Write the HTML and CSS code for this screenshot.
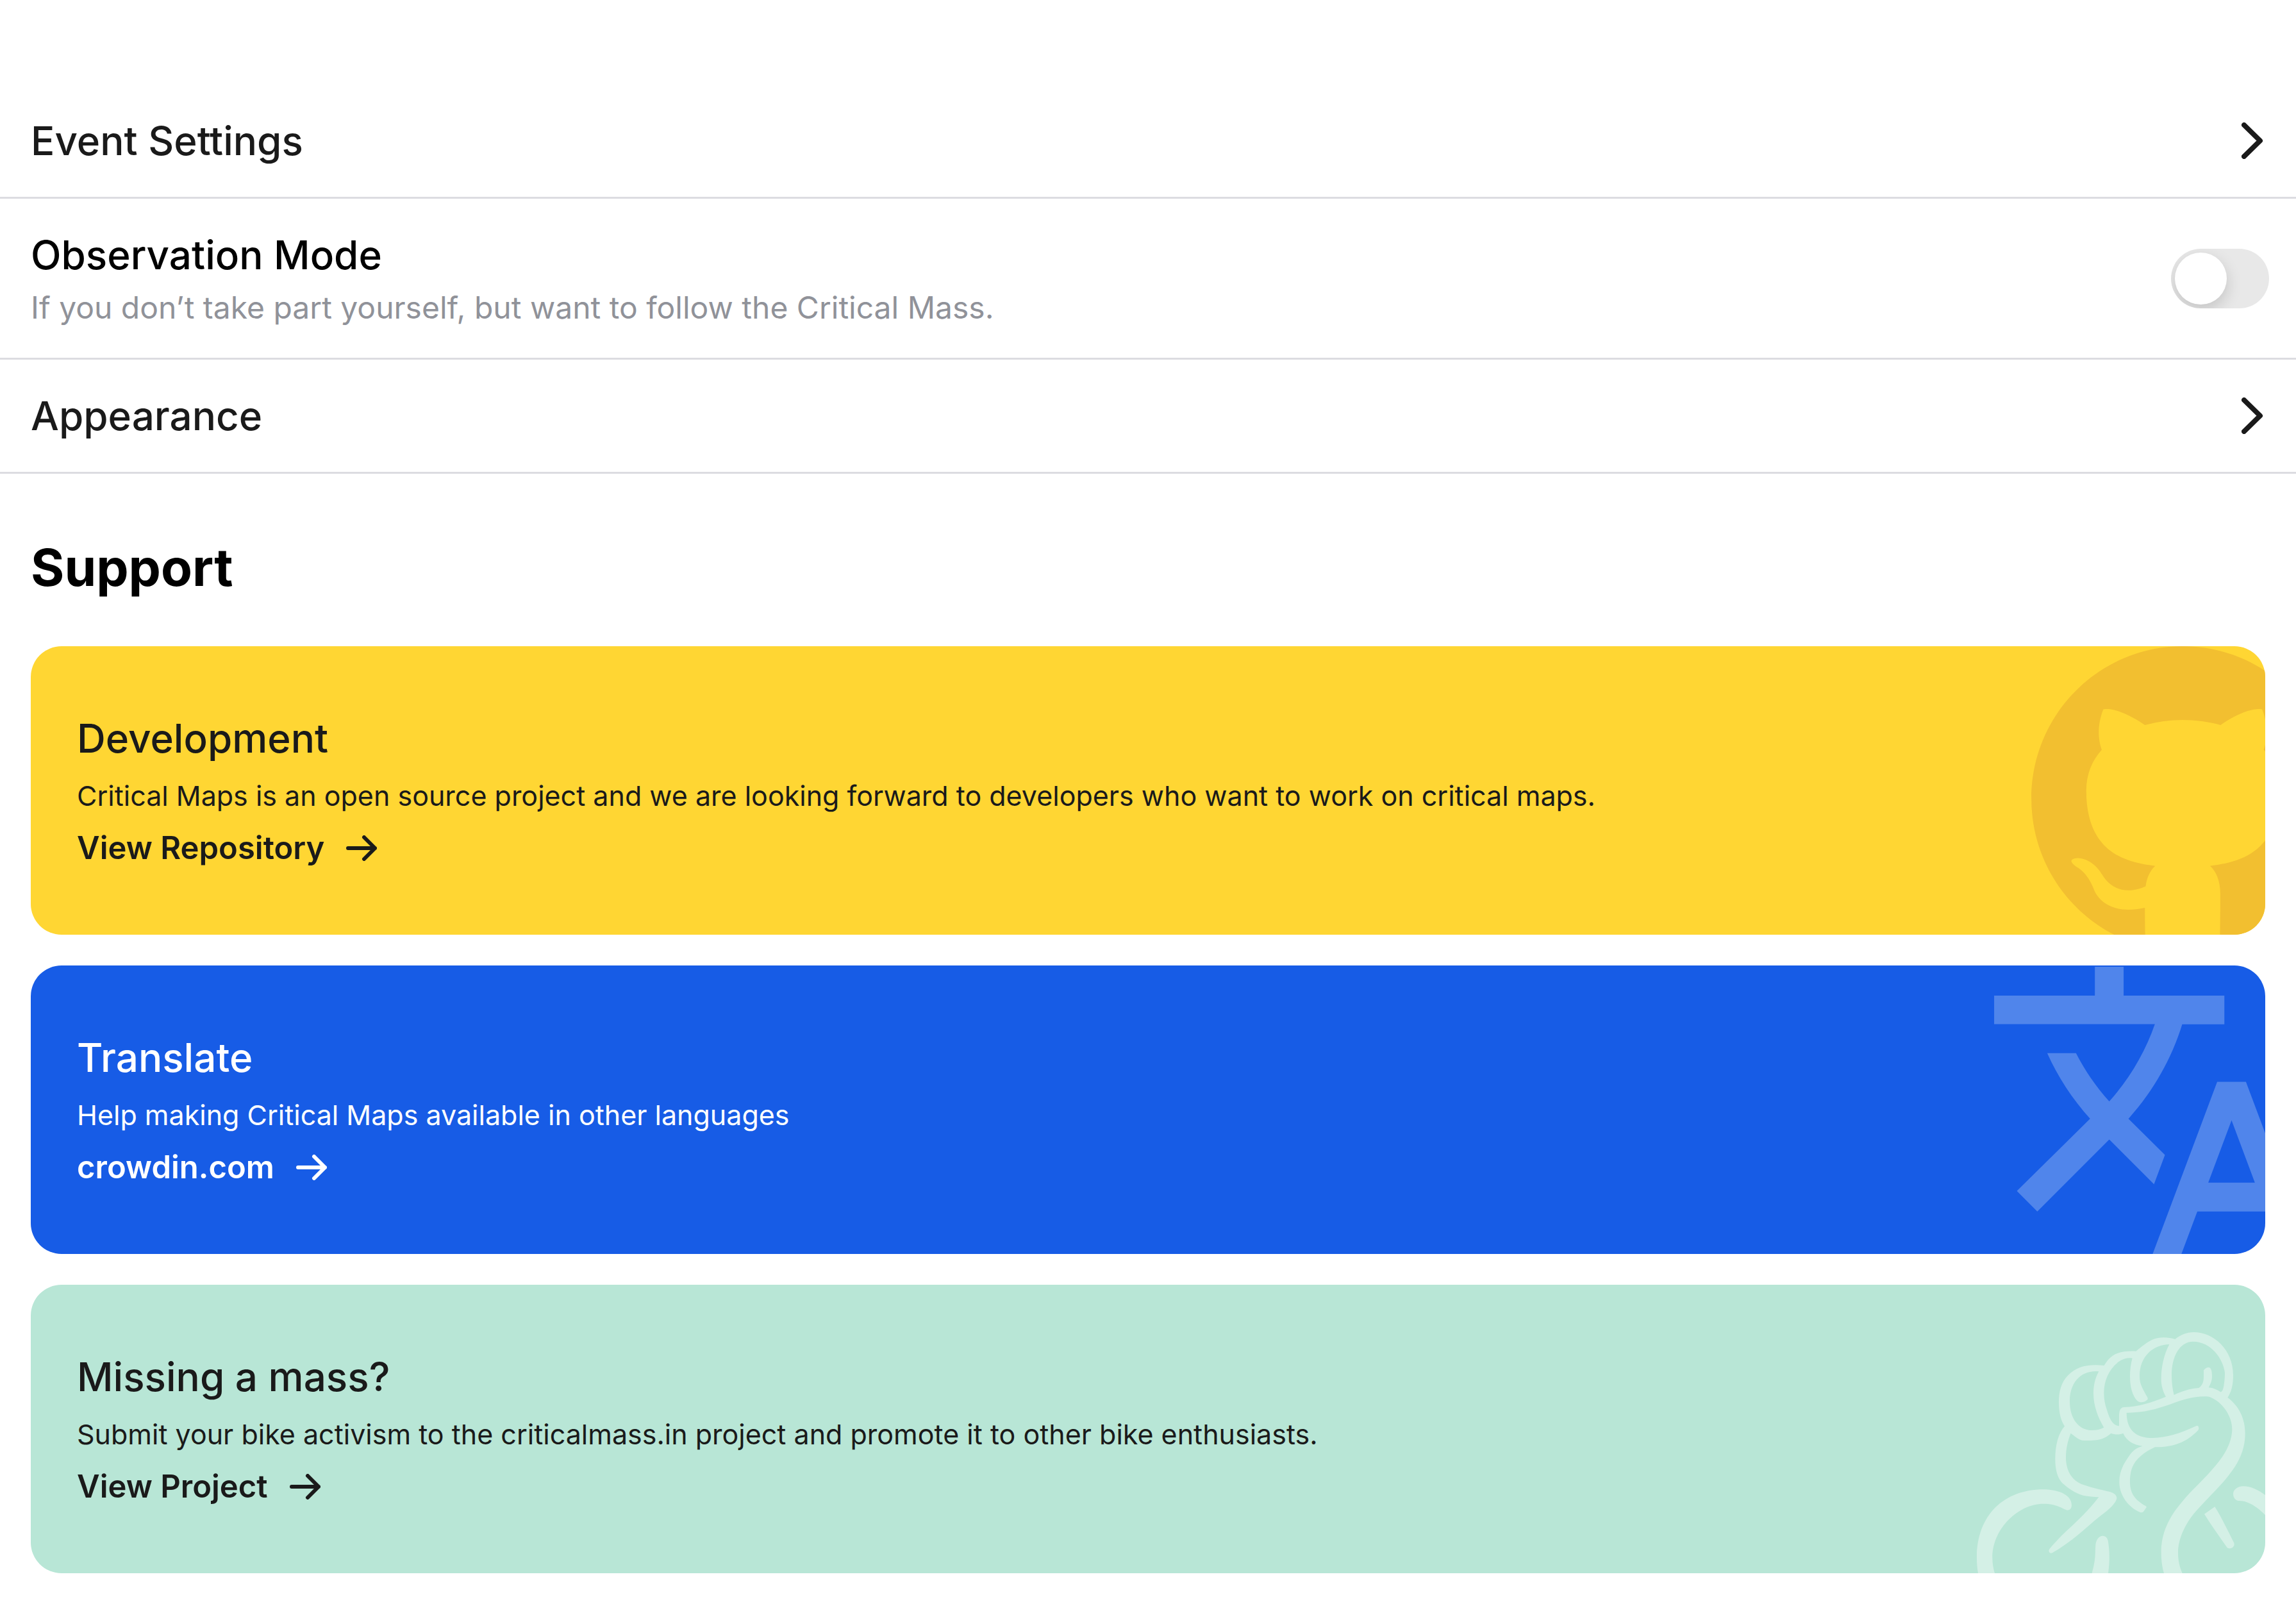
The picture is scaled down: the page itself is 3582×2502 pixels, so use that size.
FILE: index.html
```html
<!DOCTYPE html>
<html lang="en">
<head>
<meta charset="utf-8">
<meta name="viewport" content="width=device-width, initial-scale=1">
<title>Settings</title>
<link rel="stylesheet" href="styles.css">
</head>
<body>
<main class="settings">
  <nav class="rows" aria-label="Settings">
    <a class="row" href="#events">
      <span class="row-title">Event Settings</span>
      <svg class="chevron" viewBox="0 0 37 57" aria-hidden="true"><path d="M4 4 29 28.500 4 53"/></svg>
    </a>
    <div class="row row-toggle">
      <label class="row-text" for="observation">
        <span class="row-title strong">Observation Mode</span>
        <span class="row-note">If you don’t take part yourself, but want to follow the Critical Mass.</span>
      </label>
      <input class="switch" type="checkbox" role="switch" id="observation">
    </div>
    <a class="row" href="#appearance">
      <span class="row-title">Appearance</span>
      <svg class="chevron" viewBox="0 0 37 57" aria-hidden="true"><path d="M4 4 29 28.500 4 53"/></svg>
    </a>
  </nav>

  <section class="support">
    <h2 class="heading">Support</h2>
    <div class="cards">
      <article class="card card-dev">
        <svg class="art art-github" viewBox="0 0 98 96" aria-hidden="true"><path fill-rule="evenodd" d="M48.854 0C21.839 0 0 22 0 49.217c0 21.756 13.993 40.172 33.405 46.69 2.427.49 3.316-1.059 3.316-2.362 0-1.141-.08-5.052-.08-9.127-13.59 2.934-16.42-5.867-16.42-5.867-2.184-5.704-5.42-7.17-5.42-7.17-4.448-3.015.324-3.015.324-3.015 4.934.326 7.523 5.052 7.523 5.052 4.367 7.496 11.404 5.378 14.235 4.074.404-3.178 1.699-5.378 3.074-6.6-10.839-1.141-22.243-5.378-22.243-24.283 0-5.378 1.94-9.778 5.014-13.2-.485-1.222-2.184-6.275.486-13.038 0 0 4.125-1.304 13.426 5.052a46.97 46.97 0 0 1 12.214-1.63c4.125 0 8.33.571 12.213 1.63 9.302-6.356 13.427-5.052 13.427-5.052 2.67 6.763.97 11.816.485 13.038 3.155 3.422 5.015 7.822 5.015 13.2 0 18.905-11.404 23.06-22.324 24.283 1.78 1.548 3.316 4.481 3.316 9.126 0 6.6-.08 11.897-.08 13.526 0 1.304.89 2.853 3.316 2.364 19.412-6.52 33.405-24.935 33.405-46.691C97.707 22 75.788 0 48.854 0z"/></svg>
        <h3 class="card-title">Development</h3>
        <p class="card-text">Critical Maps is an open source project and we are looking forward to developers who want to work on critical maps.</p>
        <a class="card-link" href="#repository">View Repository
          <svg class="arrow" viewBox="0 0 48 40" aria-hidden="true"><path d="M3 20H45M28 3 45 20 28 37"/></svg>
        </a>
      </article>

      <article class="card card-translate">
        <svg class="art art-translate" viewBox="1 2 22 20" aria-hidden="true"><path d="M12.870 15.070l-2.540-2.510.030-.030c1.740-1.940 2.980-4.170 3.710-6.530H17V4h-7V2H8v2H1v1.990h11.170C11.500 7.920 10.440 9.750 9 11.350 8.070 10.320 7.300 9.190 6.690 8h-2c.730 1.630 1.730 3.170 2.980 4.560l-5.090 5.020L4 19l5-5 3.110 3.110.760-2.040zM18.500 10h-2L12 22h2l1.120-3h4.750L21 22h2l-4.500-12zm-2.620 7l1.620-4.330L19.120 17h-3.240z"/></svg>
        <h3 class="card-title">Translate</h3>
        <p class="card-text">Help making Critical Maps available in other languages</p>
        <a class="card-link" href="#crowdin">crowdin.com
          <svg class="arrow" viewBox="0 0 48 40" aria-hidden="true"><path d="M3 20H45M28 3 45 20 28 37"/></svg>
        </a>
      </article>

      <article class="card card-mass">
        <svg class="art art-fist" viewBox="72 294 1350 1128" aria-hidden="true">
          <path fill-rule="evenodd" d="M668 450C590 442 540 455 500 495 465 530 456 575 456 622 456 670 466 710 483 734 455 765 439 820 439 887 439 940 450 975 472 1000 500 1025 535 1050 570 1058 595 1063 620 1064 643 1066 590 1135 540 1180 470 1245 445 1272 425 1292 411 1310 407 1318 410 1328 419 1328 423 1328 427 1326 431 1323 490 1290 550 1240 610 1187 650 1153 690 1127 710 1102 722 1088 727 1078 727 1069 726 1055 712 1046 695 1041 650 1030 600 1019 560 1004 515 985 489 940 489 880 489 840 498 800 512 767 530 780 545 795 565 800 590 802 615 801 632 799 660 795 680 785 700 767 715 773 740 775 757 767 775 805 805 820 848 827 820 833 800 850 785 873 755 915 739 950 739 995 739 1060 785 1115 835 1136 845 1140 849 1137 854 1131L866 1114C867 1110 865 1109 862 1107 815 1080 789 1050 789 995 789 940 802 905 840 873 860 855 885 842 906 832 990 833 1050 812 1107 754 1112 748 1112 738 1107 733 1103 731 1101 732 1099 733 1020 770 960 788 895 789 810 789 773 745 773 671 850 672 910 655 980 631 1040 607 1100 590 1160 596 1225 620 1267 690 1267 747 1267 810 1230 872 1190 918 1130 990 1080 1030 1035 1085 970 1160 935 1235 935 1325 935 1360 940 1395 948 1422L1034 1422C1020 1390 1014 1360 1014 1325 1014 1260 1050 1180 1110 1118 1150 1075 1190 1035 1230 990 1280 930 1328 865 1328 768 1328 700 1300 640 1246 600 1262 575 1272 545 1272 495 1272 375 1180 294 1087 294 1055 294 1025 307 1000 327 965 315 920 315 890 331 865 343 840 365 817 383 780 382 740 383 710 403 692 415 680 430 668 450Z
            M643 478C560 470 507 530 507 617 507 700 550 753 612 753 633 753 652 748 667 740 640 695 618 640 618 580 618 540 627 507 643 478Z
            M800 416C780 413 757 417 735 433 690 468 667 520 667 580 667 610 673 635 680 655 693 700 708 731 738 733L738 690C738 665 742 645 762 645 830 643 890 623 957 596 943 570 935 545 935 513 935 460 947 400 973 351 900 352 834 405 834 500 834 540 850 560 870 598 874 606 872 609 867 613 855 624 835 625 824 616 800 592 789 550 789 500 789 470 793 440 800 416Z
            M1084 338C1020 338 984 410 984 495 984 530 988 560 995 588 1030 570 1070 558 1111 555 1130 540 1134 525 1134 500L1134 472C1142 462 1150 458 1158 459 1168 460 1173 475 1173 500 1173 523 1165 537 1157 553 1180 555 1197 563 1213 574 1222 572 1225 560 1228 545 1232 520 1233 505 1233 483 1225 420 1170 338 1084 338Z"/>
          <path d="M78 1422C74 1398 72 1375 72 1350 72 1150 200 1030 383 1030 440 1030 516 1048 516 1104 515 1120 508 1127 495 1127 475 1122 450 1097 383 1097 270 1097 145 1210 145 1350 145 1375 149 1400 156 1422Z"/>
          <path d="M611 1422C630 1355 625 1335 628 1290 630 1265 643 1248 661 1247 677 1247 684 1260 686 1270 693 1310 696 1365 687 1422Z"/>
          <path d="M1137 1145 1186 1111C1220 1165 1245 1220 1276 1280 1281 1297 1265 1306 1255 1306 1246 1305 1244 1302 1241 1298 1205 1247 1165 1190 1137 1145Z"/>
          <path d="M1422 1056C1390 1033 1355 1015 1320 1015 1290 1016 1273 1032 1272 1050 1272 1065 1280 1080 1296 1083 1340 1080 1390 1115 1422 1150Z"/>
        </svg>
        <h3 class="card-title">Missing a mass?</h3>
        <p class="card-text">Submit your bike activism to the criticalmass.in project and promote it to other bike enthusiasts.</p>
        <a class="card-link" href="#project">View Project
          <svg class="arrow" viewBox="0 0 48 40" aria-hidden="true"><path d="M3 20H45M28 3 45 20 28 37"/></svg>
        </a>
      </article>
    </div>
  </section>
</main>
</body>
</html>
```

FILE: styles.css
```css
* {
  box-sizing: border-box;
}

body {
  margin: 0;
  background: #fff;
  color: #1a1a1a;
  font-family: Inter, "Liberation Sans", sans-serif;
}

h2,
h3,
p {
  margin: 0;
}

a {
  color: inherit;
  text-decoration: none;
}

.settings {
  padding: 132px 0 48px;
}

.row {
  display: flex;
  align-items: center;
  justify-content: space-between;
  padding: 48px;
  border-bottom: 3px solid #dcdce1;
}

.row-toggle {
  padding-right: 42px;
}

.row-text {
  display: flex;
  flex-direction: column;
  gap: 12px;
}

.row-title {
  font-size: 62px;
  font-weight: 500;
  line-height: 79px;
}

.strong {
  color: #000;
}

.row-note {
  color: #909299;
  font-size: 48px;
  line-height: 61px;
}

.chevron {
  width: 37px;
  height: 57px;
  fill: none;
  stroke: #1a1a1a;
  stroke-width: 8;
  stroke-linecap: round;
  stroke-linejoin: round;
}

.switch {
  appearance: none;
  display: flex;
  align-items: center;
  flex: none;
  width: 153px;
  height: 93px;
  margin: 0;
  padding: 6px;
  border-radius: 48px;
  background: #e8e8e8;
  overflow: hidden;
}

.switch::before {
  content: "";
  width: 81px;
  height: 81px;
  border-radius: 50%;
  background: #fff;
  box-shadow: 0 9px 24px rgba(0, 0, 0, 0.16);
}

.switch:checked {
  justify-content: flex-end;
  background: #34c759;
}

.support {
  padding: 96px 48px 0;
}

.heading {
  margin-bottom: 73px;
  color: #000;
  font-size: 80px;
  font-weight: 700;
  line-height: 100px;
}

.cards {
  display: flex;
  flex-direction: column;
  gap: 48px;
}

.card {
  position: relative;
  display: flex;
  flex-direction: column;
  align-items: flex-start;
  gap: 24px;
  padding: 104px 72px;
  border-radius: 48px;
  overflow: hidden;
}

.card-dev {
  background: #ffd633;
}

.card-translate {
  background: #175ce6;
  color: #fff;
}

.card-mass {
  background: #b8e6d6;
}

.card-title {
  position: relative;
  font-size: 62px;
  font-weight: 500;
  line-height: 79px;
}

.card-text {
  position: relative;
  font-size: 43px;
  line-height: 53px;
}

.card-link {
  position: relative;
  display: flex;
  align-items: center;
  gap: 34px;
  font-size: 49px;
  font-weight: 600;
  line-height: 62px;
}

.arrow {
  width: 48px;
  height: 40px;
  fill: none;
  stroke: currentColor;
  stroke-width: 6;
  stroke-linecap: round;
  stroke-linejoin: round;
}

.art {
  position: absolute;
}

.art-github {
  top: 0;
  right: -109px;
  width: 474px;
  height: 464px;
  fill: #f2bf30;
}

.art-translate {
  top: 2px;
  right: -71px;
  width: 494px;
  height: 449px;
  fill: #5085eb;
}

.art-fist {
  right: 0;
  bottom: 0;
  width: 450px;
  height: 376px;
  fill: #d4f0e6;
}
```
